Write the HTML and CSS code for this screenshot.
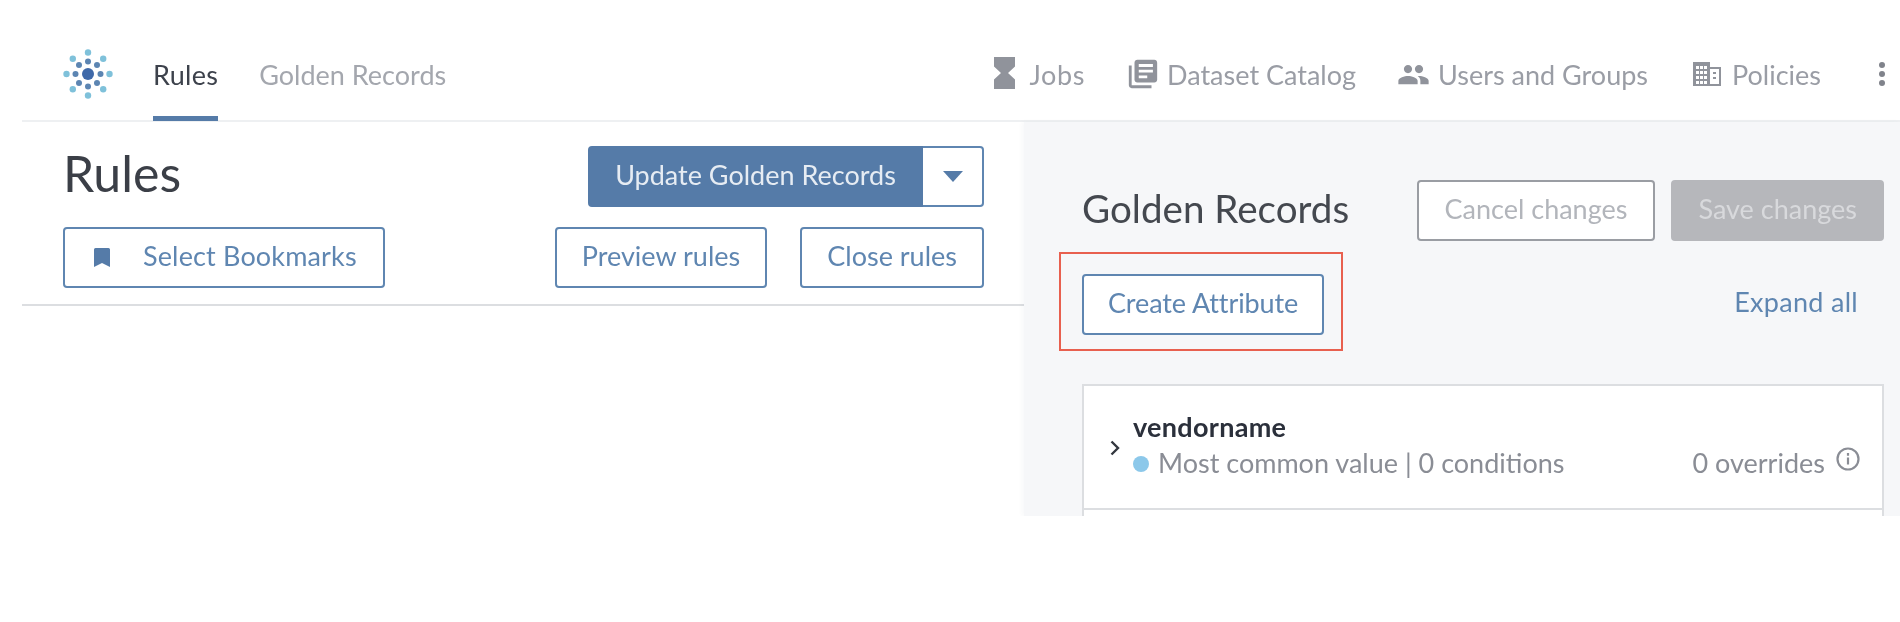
FILE: index.html
```html
<!DOCTYPE html>
<html lang="en">
<head>
<meta charset="utf-8">
<title>Rules</title>
<link rel="stylesheet" href="styles.css">
</head>
<body>
<div class="app">
  <header class="topbar">
    <svg class="logo" viewBox="-25 -25 50 50" aria-hidden="true">
      <g class="logo-outer">
        <circle cx="0" cy="-21.5" r="3.2"/><circle cx="0" cy="21.5" r="3.2"/><circle cx="-21.5" cy="0" r="3.2"/><circle cx="21.5" cy="0" r="3.2"/>
        <circle cx="-15.2" cy="-15.2" r="3.2"/><circle cx="15.2" cy="-15.2" r="3.2"/><circle cx="-15.2" cy="15.2" r="3.2"/><circle cx="15.2" cy="15.2" r="3.2"/>
      </g>
      <g class="logo-inner">
        <circle cx="0" cy="-12.5" r="3"/><circle cx="0" cy="12.5" r="3"/><circle cx="-12.5" cy="0" r="3"/><circle cx="12.5" cy="0" r="3"/>
        <circle cx="-9" cy="-9" r="3"/><circle cx="9" cy="-9" r="3"/><circle cx="-9" cy="9" r="3"/><circle cx="9" cy="9" r="3"/>
      </g>
      <circle class="logo-core" cx="0" cy="0" r="6"/>
    </svg>
    <nav class="tabs">
      <a class="tab tab-active">Rules</a>
      <a class="tab">Golden Records</a>
    </nav>
    <nav class="tools">
      <a class="tool tool-jobs">
        <svg class="ico ico-jobs" viewBox="6 2 12 20" preserveAspectRatio="none"><path d="M6 2v6h.01L6 8.01 10 12l-4 4 .01.01H6V22h12v-5.99h-.01L18 16l-4-4 4-3.99-.01-.01H18V2H6z"/></svg>
        <span>Jobs</span>
      </a>
      <a class="tool tool-data">
        <svg class="ico ico-data" viewBox="0 0 24 24"><path d="M4 6H2v14c0 1.1.9 2 2 2h14v-2H4V6zm16-4H8c-1.1 0-2 .9-2 2v12c0 1.1.9 2 2 2h12c1.1 0 2-.9 2-2V4c0-1.1-.9-2-2-2zm-1 9H9V9h10v2zm-4 4H9v-2h6v2zm4-8H9V5h10v2z"/></svg>
        <span>Dataset Catalog</span>
      </a>
      <a class="tool tool-users">
        <svg class="ico ico-users" viewBox="0 0 24 24"><path d="M16 11c1.66 0 2.99-1.34 2.99-3S17.66 5 16 5c-1.66 0-3 1.34-3 3s1.34 3 3 3zm-8 0c1.66 0 2.99-1.34 2.99-3S9.66 5 8 5C6.34 5 5 6.34 5 8s1.34 3 3 3zm0 2c-2.33 0-7 1.17-7 3.5V19h14v-2.5c0-2.33-4.67-3.5-7-3.5zm8 0c-.29 0-.62.02-.97.05 1.16.84 1.97 1.97 1.97 3.45V19h6v-2.5c0-2.33-4.67-3.5-7-3.5z"/></svg>
        <span>Users and Groups</span>
      </a>
      <a class="tool tool-policies">
        <svg class="ico ico-policies" viewBox="0 0 28 24"><path fill-rule="evenodd" d="M0 0h17v5h11v19H0zM3 4v3h3V4zM7 4v3h3V4zM11 4v3h3V4zM3 9v3h3V9zM7 9v3h3V9zM11 9v3h3V9zM3 14v3h3v-3zM7 14v3h3v-3zM11 14v3h3v-3zM3 19v3h3v-3zM7 19v3h3v-3zM11 19v3h3v-3zM17 7v15h9V7zM20 10v2h3v-2z"/><path d="M20 15h3v2h-3z"/></svg>
        <span>Policies</span>
      </a>
      <span class="kebab"><i></i><i></i><i></i></span>
    </nav>
  </header>

  <main class="workspace">
    <section class="rules">
      <div class="rules-head">
        <div class="rules-row rules-row-top">
          <h1 class="rules-title">Rules</h1>
          <div class="split">
            <button class="btn btn-solid split-main">Update Golden Records</button>
            <button class="split-caret" aria-label="More"><span class="caret"></span></button>
          </div>
        </div>
        <div class="rules-row">
          <button class="btn btn-line btn-bookmarks">
            <svg class="ico-bookmark" viewBox="0 0 16 19"><path d="M1.5 0h13A1.5 1.5 0 0 1 16 1.5V19l-8-4-8 4V1.500A1.500 1.500 0 0 1 1.500 0z"/></svg>
            <span>Select Bookmarks</span>
          </button>
          <div class="rules-actions">
            <button class="btn btn-line">Preview rules</button>
            <button class="btn btn-line">Close rules</button>
          </div>
        </div>
      </div>
    </section>

    <aside class="panel">
      <div class="panel-head">
        <h2 class="panel-title">Golden Records</h2>
        <div class="panel-actions">
          <button class="btn btn-muted">Cancel changes</button>
          <button class="btn btn-disabled">Save changes</button>
        </div>
      </div>
      <div class="panel-tools">
        <div class="callout">
          <button class="btn btn-line btn-create">Create Attribute</button>
        </div>
        <a class="expand">Expand all</a>
      </div>
      <div class="attrs">
        <div class="attr">
          <svg class="chev" viewBox="0 0 10 16"><path d="M1.500 1.500 8 8l-6.500 6.500"/></svg>
          <div class="attr-body">
            <div class="attr-name">vendorname</div>
            <div class="attr-meta">
              <span class="dot"></span>
              <span class="attr-rule">Most common value | 0 conditions</span>
              <span class="attr-over">0 overrides</span>
              <svg class="info" viewBox="0 0 24 24"><circle cx="12" cy="12" r="10.500"/><path d="M12 10.500v7M12 6v2.800"/></svg>
            </div>
          </div>
        </div>
        <div class="attr"></div>
      </div>
    </aside>
  </main>
</div>
</body>
</html>
```
FILE: styles.css
```css
* { box-sizing: border-box; }
html, body { margin: 0; padding: 0; background: #fff; }
body { font-family: "Lato", "Liberation Sans", sans-serif; font-size: 27px; color: #33373f; }
h1, h2 { margin: 0; font-weight: 400; }
button { font: inherit; cursor: pointer; }

.app { height: 516px; margin-left: 22px; overflow: hidden; display: flex; flex-direction: column; filter: blur(.5px); }

.topbar { height: 122px; flex: none; padding-top: 30px; padding-left: 41px; display: flex; align-items: stretch; border-bottom: 2px solid #eef0f2; }
.logo { width: 50px; height: 50px; align-self: center; margin-right: 40px; margin-top: -2px; }
.logo-outer { fill: #7fc1da; }
.logo-inner { fill: #5c85b2; }
.logo-core { fill: #3f69a9; }

.tabs { display: flex; gap: 41px; }
.tab { display: flex; align-items: center; color: #a4a7ae; border-bottom: 5px solid transparent; padding-top: 2px; margin-bottom: -1px; }
.tab-active { color: #3d424c; border-bottom-color: #557ba8; letter-spacing: .3px; }

.tools { margin-left: auto; display: flex; align-items: center; color: #9a9da5; padding-right: 15px; margin-top: -2px; }
.tool { display: flex; align-items: center; }
.tool-jobs { gap: 15px; margin-right: 41px; }
.tool-jobs span { letter-spacing: .6px; }
.tool-data { gap: 7px; margin-right: 41px; }
.tool-users { gap: 8px; margin-right: 45px; }
.tool-policies { gap: 11px; margin-right: 58px; }
.ico { fill: #90939b; flex: none; display: block; }
.ico-jobs { width: 21px; height: 32px; margin-top: -3px; }
.ico-data { width: 34px; height: 34px; }
.ico-users { width: 33px; height: 33px; }
.ico-policies { width: 28px; height: 24px; }
.kebab { display: flex; flex-direction: column; gap: 3px; }
.kebab i { display: block; width: 6px; height: 6px; border-radius: 50%; background: #80838b; }

.workspace { flex: 1; display: flex; min-height: 0; }

.rules { flex: 1; min-width: 0; }
.rules-head { height: 184px; padding: 24px 40px 0 41px; border-bottom: 2px solid #dcdee1; display: flex; flex-direction: column; gap: 20px; }
.rules-row { display: flex; align-items: center; justify-content: space-between; height: 61px; }
.rules-title { font-size: 50px; line-height: 61px; color: #3b3f47; padding-bottom: 6px; }
.rules-actions { display: flex; gap: 33px; }

.btn { height: 61px; padding: 0 25px 5px; border: 2px solid #5f86b1; border-radius: 4px; background: #fff; color: #5f86b1; white-space: nowrap; display: flex; align-items: center; }
.btn-solid { background: #557ba8; border-color: #557ba8; color: #e6ecf3; }
.btn-muted { border-color: #9a9da3; color: #b2b5bb; padding: 0 26px 5px; }
.btn-disabled { background: #b6b7bb; border-color: #b6b7bb; color: #d8d9dc; }
.btn-create { padding: 0 24px 5px; letter-spacing: -.1px; }
.btn-bookmarks { width: 322px; padding-left: 29px; gap: 33px; letter-spacing: .15px; }
.ico-bookmark { width: 16px; height: 19px; fill: #557ba8; flex: none; margin-top: 5px; }

.split { display: flex; }
.split-main { width: 335px; border-radius: 4px 0 0 4px; justify-content: center; padding: 0 0 5px; }
.split-caret { width: 61px; height: 61px; padding: 0; background: #fff; border: 2px solid #5f86b1; border-left: 0; border-radius: 0 4px 4px 0; display: flex; align-items: center; justify-content: center; }
.caret { width: 0; height: 0; border-left: 10px solid transparent; border-right: 10px solid transparent; border-top: 11px solid #557ba8; }

.panel { width: 876px; flex: none; background: #f6f7f9; box-shadow: -2px 0 4px rgba(60, 70, 90, .04); padding: 58px 16px 0 58px; }
.panel-head { display: flex; align-items: center; justify-content: space-between; height: 61px; }
.panel-title { font-size: 38.600px; color: #44484f; padding-bottom: 5px; }
.panel-actions { display: flex; gap: 16px; }
.panel-tools { display: flex; align-items: center; justify-content: space-between; margin-top: 11px; margin-left: -23px; padding-right: 26px; }
.callout { border: 2px solid #e8604f; padding: 20px 0 14px 21px; height: 99px; width: 284px; }
.expand { color: #5f86b1; letter-spacing: .3px; }

.attrs { margin-top: 33px; }
.attr { background: #fff; border: 2px solid #dcdee1; height: 126px; display: flex; align-items: center; padding-left: 26px; margin-bottom: -2px; }
.chev { width: 10px; height: 16px; flex: none; fill: none; stroke: #33373f; stroke-width: 2.400; margin-top: 2px; }
.attr-body { flex: 1; margin-left: 13px; padding-right: 22px; padding-bottom: 5px; }
.attr-name { font-weight: 700; color: #2b303b; line-height: 35px; letter-spacing: .3px; }
.attr-meta { display: flex; align-items: center; color: #8a8d95; line-height: 37px; }
.dot { width: 16px; height: 16px; border-radius: 50%; background: #8cc8ea; margin-right: 9px; flex: none; margin-top: 4px; }
.attr-over { margin-left: auto; }
.info { width: 24px; height: 24px; margin-left: 11px; margin-top: -6px; fill: none; stroke: #8a8d95; stroke-width: 2.200; flex: none; }
```
